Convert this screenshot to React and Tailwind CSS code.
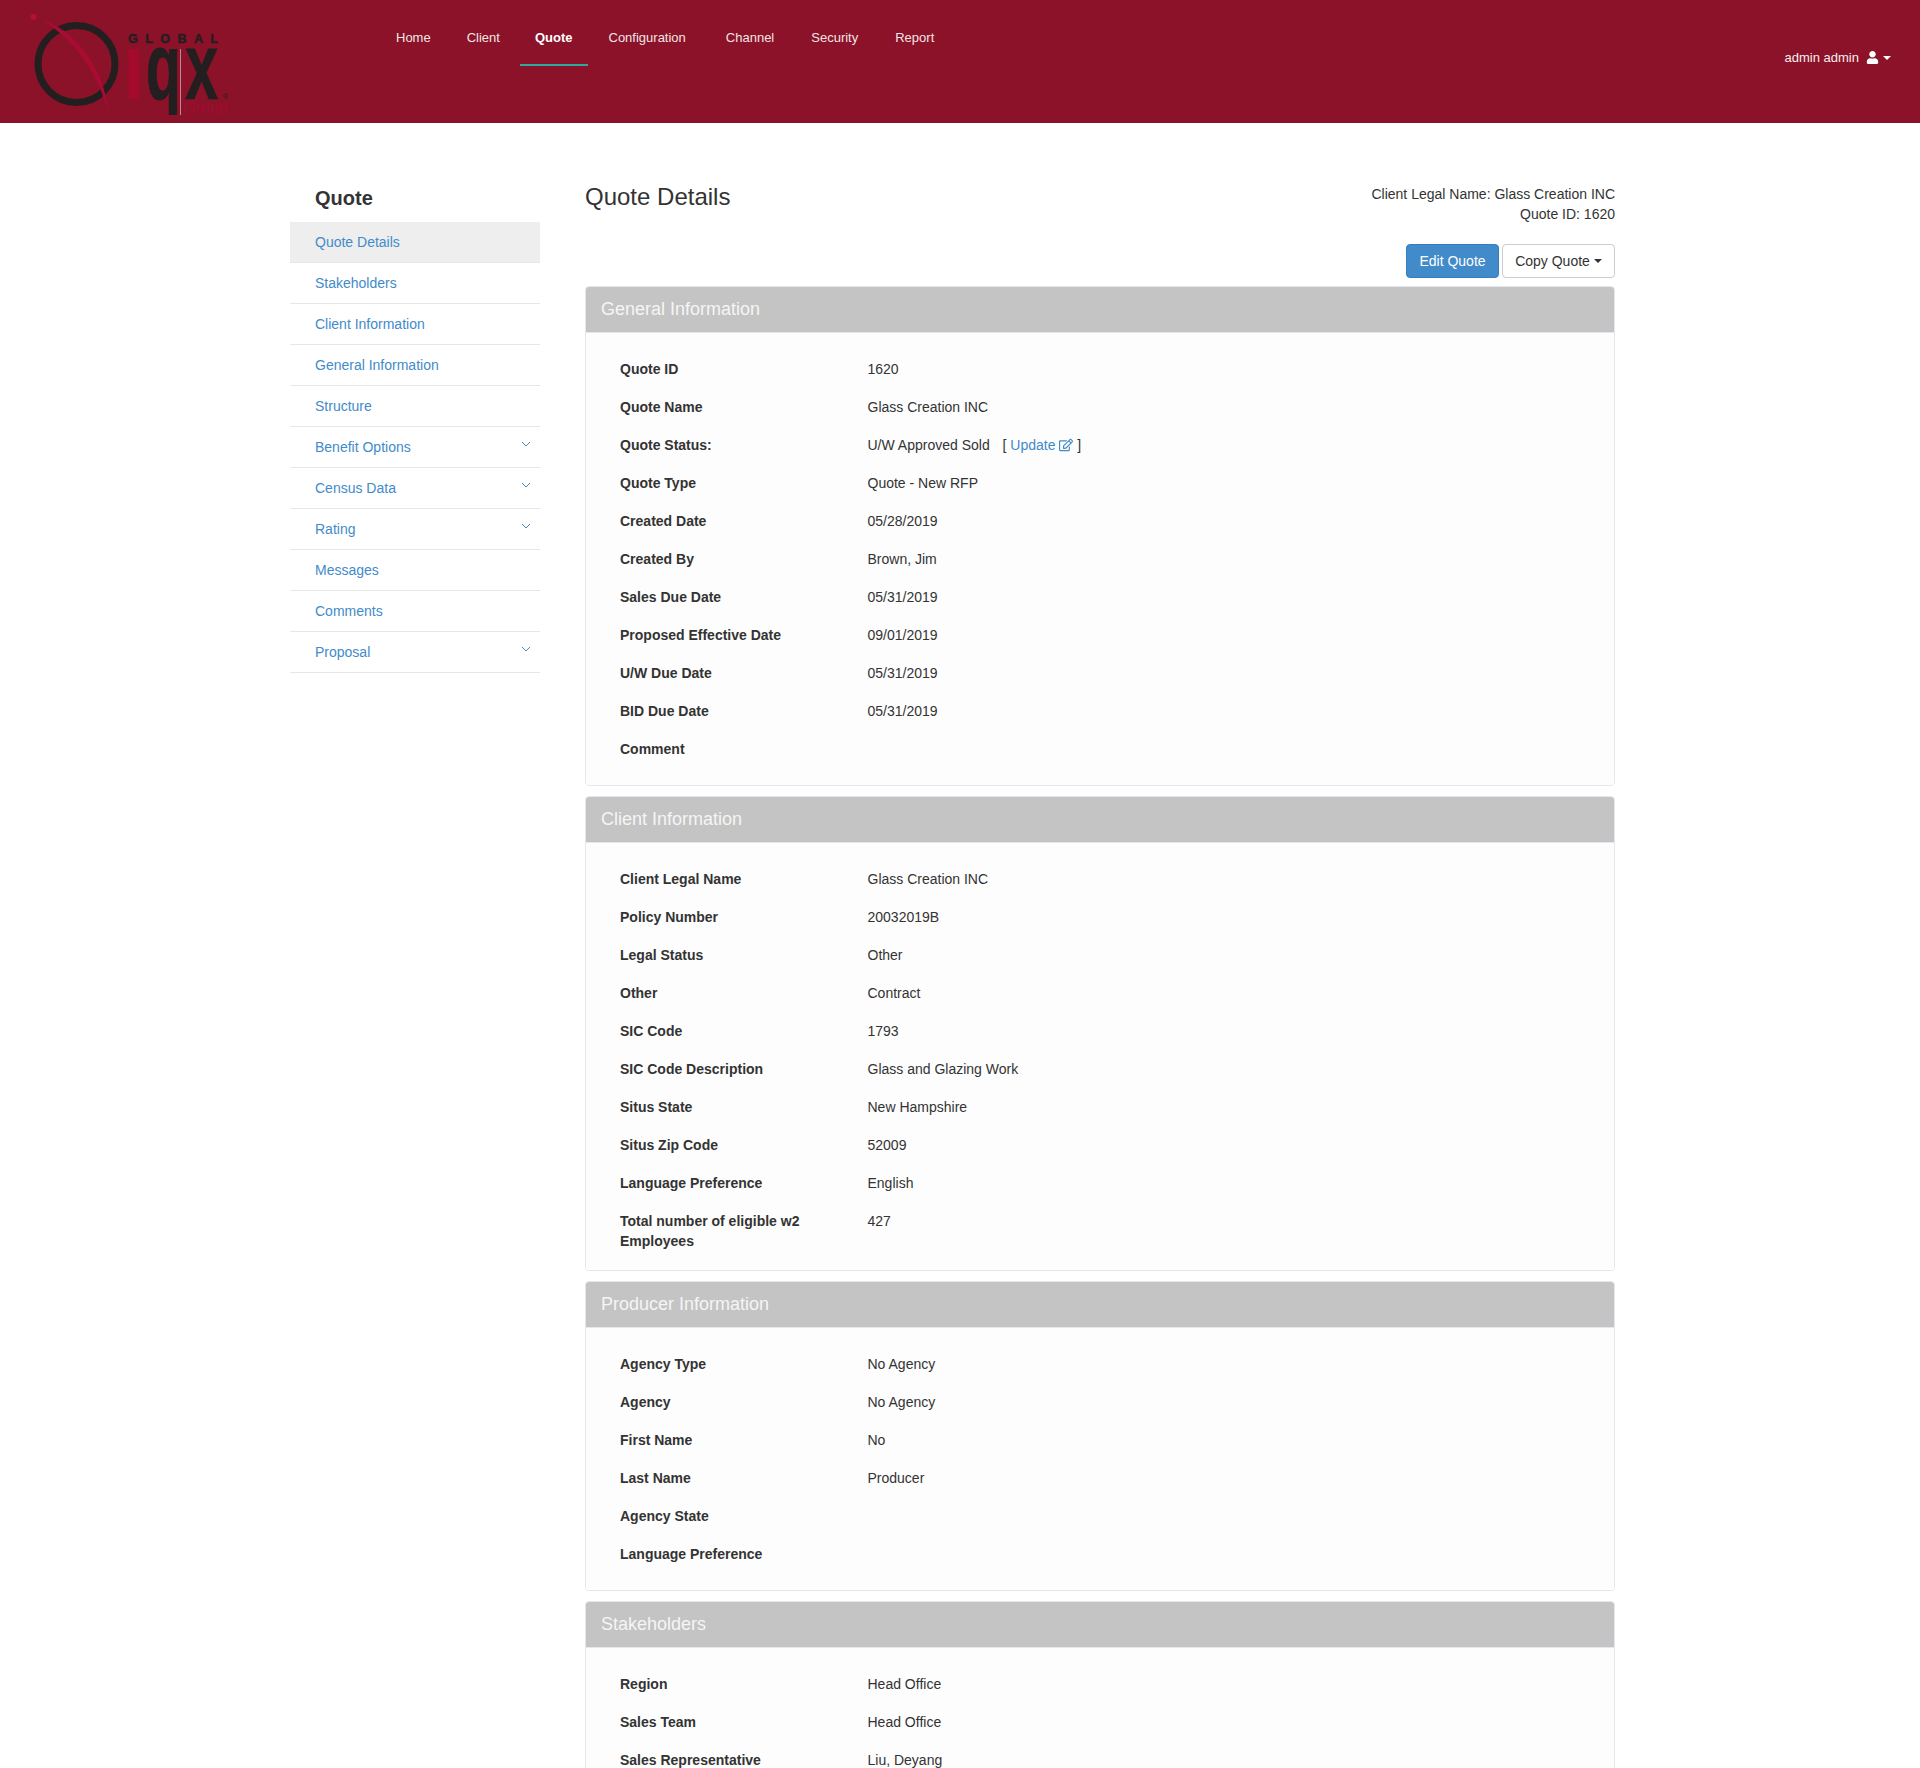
import React from "react";
import { FaRegEdit, FaUser } from "react-icons/fa";

const nav = [
  ["Home", false, "mx-[3px]"], ["Client", false, "mx-[3px]"], ["Quote", true, "ml-[2px] mr-[3px]"], ["Configuration", false, "ml-[3px] mr-[7px]"],
  ["Channel", false, "ml-[3px] mr-[4px]"], ["Security", false, "ml-[3px] mr-[4px]"], ["Report", false, "mx-[3px]"],
];
const side = [
  ["Quote Details", false, true], ["Stakeholders"], ["Client Information"], ["General Information"], ["Structure"],
  ["Benefit Options", true], ["Census Data", true], ["Rating", true], ["Messages"], ["Comments"], ["Proposal", true],
];
const panels = [
  ["General Information", "pb-[8px]", [
    ["Quote ID", "1620"], ["Quote Name", "Glass Creation INC"], ["Quote Status:", "STATUS"], ["Quote Type", "Quote - New RFP"],
    ["Created Date", "05/28/2019"], ["Created By", "Brown, Jim"], ["Sales Due Date", "05/31/2019"],
    ["Proposed Effective Date", "09/01/2019"], ["U/W Due Date", "05/31/2019"], ["BID Due Date", "05/31/2019"], ["Comment", ""],
  ]],
  ["Client Information", "pb-[1px]", [
    ["Client Legal Name", "Glass Creation INC"], ["Policy Number", "20032019B"], ["Legal Status", "Other"], ["Other", "Contract"],
    ["SIC Code", "1793"], ["SIC Code Description", "Glass and Glazing Work"], ["Situs State", "New Hampshire"],
    ["Situs Zip Code", "52009"], ["Language Preference", "English"], ["Total number of eligible w2 Employees", "427"],
  ]],
  ["Producer Information", "pb-[8px]", [
    ["Agency Type", "No Agency"], ["Agency", "No Agency"], ["First Name", "No"], ["Last Name", "Producer"],
    ["Agency State", ""], ["Language Preference", ""],
  ]],
  ["Stakeholders", "pb-[60px]", [
    ["Region", "Head Office"], ["Sales Team", "Head Office"], ["Sales Representative", "Liu, Deyang"],
  ]],
];

function Logo() {
  return (
    <svg width="240" height="123" viewBox="0 0 240 123" className="block">
      <defs>
        <clipPath id="qclip"><rect x="140" y="40" width="40" height="75" /></clipPath>
      </defs>
      <circle cx="76.5" cy="64" r="38.5" fill="none" stroke="#231f20" strokeWidth="7" />
      <circle cx="33.5" cy="17" r="3" fill="#b5103a" />
      <path d="M42 20 C70 27 105 65 108 112 C99 75 75 40 42 20 Z" fill="#a80c32" />
      <text x="128" y="42.5" fill="#231f20" stroke="#231f20" strokeWidth="0.4" fontFamily="'Liberation Sans', sans-serif" fontWeight="700" fontSize="12.5" textLength="90">GLOBAL</text>
      <rect x="128.5" y="49" width="10.5" height="50" fill="#a30a2e" />
      <g clipPath="url(#qclip)">
        <text transform="translate(146 99) scale(0.6 1)" fill="#231f20" stroke="#231f20" strokeWidth="1" fontFamily="'Liberation Sans', sans-serif" fontWeight="700" fontSize="95">q</text>
      </g>
      <rect x="180" y="49" width="1" height="66" fill="#b98a96" />
      <text transform="translate(185 99) scale(0.63 1)" fill="#231f20" stroke="#231f20" strokeWidth="0.6" fontFamily="'Liberation Sans', sans-serif" fontWeight="700" fontSize="95">x</text>
      <text x="183" y="113" fill="#a00c30" fontFamily="'Liberation Sans', sans-serif" fontSize="16">Group</text>
      <text x="223" y="99" fill="#231f20" fontFamily="'Liberation Sans', sans-serif" fontSize="7">®</text>
    </svg>
  );
}

function Chevron() {
  return (
    <svg width="10" height="6" viewBox="0 0 10 6" className="absolute right-[9px] top-[14px]">
      <path d="M1 1 L5 5 L9 1" fill="none" stroke="#428bca" strokeWidth="1" />
    </svg>
  );
}

function Row({ label, value }) {
  return (
    <div className="flex mb-[18px] leading-[20px]">
      <div className="w-[247.5px] shrink-0 pr-[50px] font-bold text-[#333]">{label}</div>
      <div className="text-[#333]">
        {value === "STATUS" ? (
          <span>
            U/W Approved Sold <span className="ml-[9px]">[ </span>
            <span className="text-[#428bca]">Update <FaRegEdit className="inline-block align-[-2px] text-[14px]" /></span> ]
          </span>
        ) : value}
      </div>
    </div>
  );
}

export default function App() {
  return (
    <div className="h-[1768px] overflow-hidden bg-white text-[14px] text-[#333] font-['Liberation_Sans',Arial,sans-serif]">
      <header className="h-[123px] bg-[#8b1228] flex text-[13px] text-[#f3e4e6]">
        <div className="w-[378px] shrink-0"><Logo /></div>
        <nav className="flex items-start">
          {nav.map(([n, active, m]) => (
            <div key={n} className={m + " px-[15px] pt-[28px] pb-[16px] leading-[20px] " + (active ? "font-bold text-white border-b-2 border-[#2fa8a0]" : "")}>{n}</div>
          ))}
        </nav>
        <div className="ml-auto pr-[29px] pt-[48px] leading-[20px] flex items-start text-[#f8eef0]">
          <span>admin admin</span>
          <FaUser className="ml-[7px] mt-[3px] text-[13px] text-white" />
          <span className="ml-[4px] mt-[8px] w-0 h-0 border-x-[4px] border-x-transparent border-t-[4px] border-t-white" />
        </div>
      </header>
      <div className="flex pl-[290px] pt-[61px]">
        <aside className="w-[250px] shrink-0 pt-[1px]">
          <h2 className="pl-[25px] text-[20px] font-bold leading-[26px] h-[37px]">Quote</h2>
          <ul>
            {side.map(([n, chev, active]) => (
              <li key={n} className={"relative h-[41px] pl-[25px] pt-[10px] leading-[20px] text-[#428bca] border-b border-[#e7e7e7] " + (active ? "bg-[#eeeeee]" : "")}>
                {n}{chev && <Chevron />}
              </li>
            ))}
          </ul>
        </aside>
        <main className="ml-[45px] w-[1030px]">
          <div className="flex justify-between h-[60px]">
            <h1 className="text-[24px] leading-[26px] text-[#333]">Quote Details</h1>
            <div className="text-right leading-[20px]">
              <div>Client Legal Name: Glass Creation INC</div>
              <div>Quote ID: 1620</div>
            </div>
          </div>
          <div className="flex justify-end gap-[3px] mb-[8px]">
            <button className="h-[34px] w-[93px] rounded-[4px] bg-[#428bca] border border-[#357ebd] text-white">Edit Quote</button>
            <button className="h-[34px] w-[113px] rounded-[4px] bg-white border border-[#cccccc] text-[#333] flex items-center justify-center">
              Copy Quote<span className="ml-[4px] w-0 h-0 border-x-[4px] border-x-transparent border-t-[4px] border-t-[#333]" />
            </button>
          </div>
          {panels.map(([title, pb, rows]) => (
            <section key={title} className="mb-[10px] rounded-[4px] border border-[#e6e6ee] bg-[#fdfdfd] overflow-hidden">
              <div className="h-[46px] bg-[#c4c4c4] border-b border-[#e6e6ee] px-[15px] text-[18px] leading-[44px] text-[#f5f5f5]">{title}</div>
              <div className={"pt-[26px] pl-[34px] bg-[#fdfdfd] " + pb}>
                {rows.map(([l, v]) => <Row key={l} label={l} value={v} />)}
              </div>
            </section>
          ))}
        </main>
      </div>
    </div>
  );
}
